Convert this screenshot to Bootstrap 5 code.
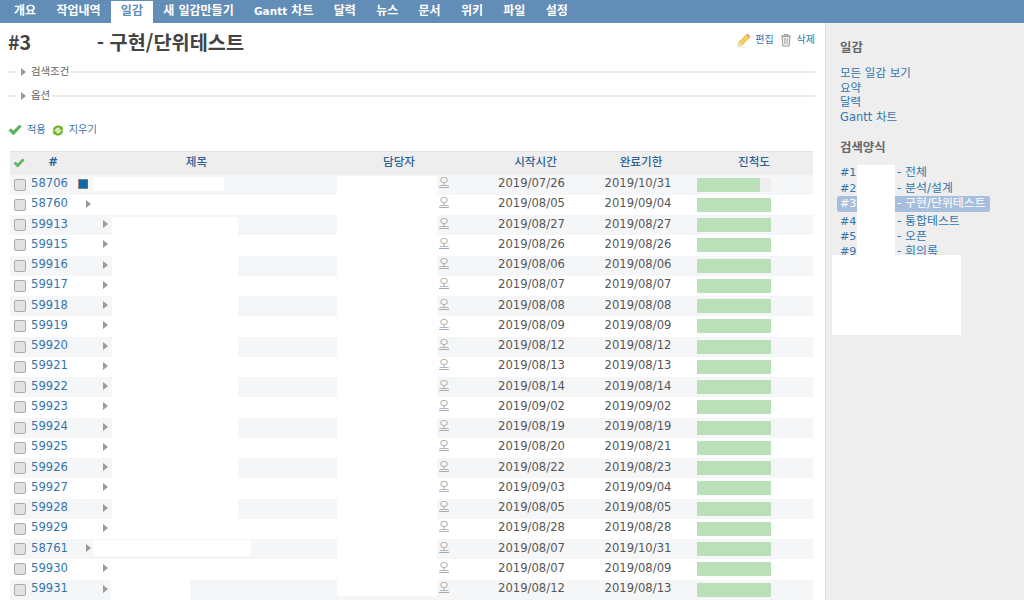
<!DOCTYPE html>
<html lang="ko">
<head>
<meta charset="utf-8">
<title>일감</title>
<link href="https://cdn.jsdelivr.net/npm/bootstrap@5.3.0/dist/css/bootstrap.min.css" rel="stylesheet">
<style>
html,body{height:100%;overflow:hidden}
body{font-family:"DejaVu Sans","Noto Sans CJK KR",sans-serif;font-size:11.5px;color:#555;background:#fff}
a{color:#3375ab;text-decoration:none}
.tabbar{height:23px;background:#628db6;padding-left:4px;gap:.3px}
.tabbar .tablink{display:block;height:22px;margin-top:1px;padding:0 10px;line-height:21px;font-size:12px;font-weight:700;color:#fff;white-space:nowrap}
.tabbar .tablink span{font-size:10.5px}
.tabbar .tablink.on{background:#fff;color:#628db6}
.shell{height:577px}
.mainpane{width:825px;padding:0 10px 0 8px;overflow:hidden}
.sidepane{width:199px;background:#eee;border-left:1px solid #e0e0e0;padding:17px 0 0 14px;position:relative;overflow:hidden}
.pagehead{height:37px;padding-top:6px}
.pagehead h2{font-family:"Noto Sans CJK KR",sans-serif;font-size:19.7px;line-height:26px;font-weight:700;color:#444;margin:0}
.pagehead h2 span{margin-left:65.5px}
.acts{font-size:10px;line-height:14px;padding-top:4px}
.acts a{margin-left:4px}
.acts a+svg{margin-left:6px}
.acts svg+a+svg+a{margin-left:5px}
.ico{display:block;flex:none}
.legendline{height:24px;color:#666;font-size:10.4px}
.legendline::before{content:"";width:8px;border-top:2px solid #eaeaea;margin-right:5px}
.legendline::after{content:"";flex:1;border-top:2px solid #eaeaea;margin-left:2px}
.legendline .tri{margin-right:5px}
.applyrow{font-size:10.2px;height:20px;margin-top:12px}
.applyrow a{margin-right:6px}
.applyrow svg{margin-right:5px}
.tablewrap{margin:11px 0 0 2px;width:803px;position:relative}
.issues{table-layout:fixed;width:803px;margin:0;font-size:11.6px;--bs-table-striped-bg:#f5f6f8;--bs-table-striped-color:#555;--bs-table-color:#555;--bs-table-bg:transparent}
.issues>thead th{height:23px;padding:0 0 1px;background:#eee;box-shadow:none;border:0;border-top:1px solid #e2e2e2;font-size:11.6px;font-weight:500;color:#2f6393;text-align:center;vertical-align:middle}
.issues>thead th.th-id{font-weight:700}
.issues>tbody>tr{height:20.25px}
.issues>tbody>tr>td{padding:0;border:0;vertical-align:middle;line-height:14px;height:20.25px}
.issues>tbody>tr>td.c-txt{padding-bottom:3px}
.issues .form-check-input{width:12px;height:12px;margin:0 0 0 4px;float:none;display:block;border:1px solid #aaa;border-radius:2px;background-color:#e2e2e2}
.th-title{padding-right:22px!important}
.th-start{padding-left:16px!important}
.th-prog{padding-left:7px!important}
.c-id{padding-left:3px!important}
.titlebox{height:20px}
.titlebox>svg{margin-bottom:2px}
.lv1{padding-left:8px}
.lv2{padding-left:25px}
.redact{display:block;background:#fff;align-self:stretch}
.r-a{width:131px;margin:2px 0 4px 5px}
.r-b{width:126px;margin-left:4px}
.r-c{width:158px;margin:1px 0 3px 2px}
.r-d{width:79px;margin-left:3px;margin-bottom:-2px}
.r-e{margin-top:2px}
.assignee a{color:#aaa;text-decoration:underline;padding-left:102px;display:block;font-size:11px}
.issues>tbody>tr>td.c-start{padding-left:8px;text-align:center}
.issues>tbody>tr>td.c-end{padding-right:6px;text-align:center}
.c-prog{padding-left:9px!important}
.issues .progress{height:14px;width:74px;border-radius:0;background:#eee}
.issues .progress-bar{background:#bae0ba}
.mask-assignee{position:absolute;left:327px;width:100px;top:25px;height:420px;background:#fff}
.sidepane h3{font-size:12.4px;line-height:16px;font-weight:700;color:#666;margin:0 0 10px}
.sidelinks a{display:block;line-height:14.6px;font-size:11.5px}
.sidelinks{margin-bottom:16px}
.sidelinks+h3{margin-bottom:9px}
.querylist a{display:flex;line-height:15px;font-size:11.9px;height:15.2px;margin-left:-3px;padding-left:3px;width:153px;white-space:nowrap}
.querylist a b{font-weight:400;width:57px;flex:none;font-size:11.2px}
.querylist a.on{background:#a7bfdc;color:#fff;border-radius:2px;height:16px;margin:0 0 2px -3px}
.mask-q{position:absolute;left:31px;top:142px;width:38px;height:90px;background:#fff}
.mask-big{position:absolute;left:6px;top:232px;width:129px;height:80px;background:#fff}
</style>
</head>
<body>
<svg width="0" height="0" class="position-absolute">
<symbol id="tri" viewBox="0 0 5 8"><path d="M0 0l5 4-5 4z" fill="#9a9a9a"/></symbol>
<symbol id="chk" viewBox="0 0 14 12"><path d="M1 6.5l1.8-1.8 2.6 2.4L11.4 1 13.2 2.6 5.4 11z" fill="#5cb85c" stroke="#4a9a4a" stroke-width=".6"/></symbol>
</svg>
<nav class="tabbar d-flex">
<a class="tablink" href="#">개요</a><a class="tablink" href="#">작업내역</a><a class="tablink on" href="#">일감</a><a class="tablink" href="#">새 일감만들기</a><a class="tablink" href="#"><span>Gantt</span> 차트</a><a class="tablink" href="#">달력</a><a class="tablink" href="#">뉴스</a><a class="tablink" href="#">문서</a><a class="tablink" href="#">위키</a><a class="tablink" href="#">파일</a><a class="tablink" href="#">설정</a>
</nav>
<div class="shell d-flex">
<main class="mainpane">
<div class="pagehead d-flex justify-content-between">
<h2>#3<span>- 구현/단위테스트</span></h2>
<div class="acts d-flex align-items-start">
<svg class="ico" width="15" height="15" viewBox="0 0 15 15"><path d="M2 13l1-4 7.5-7.5 3 3L6 12z" fill="#f2cf5c" stroke="#d8ae3c" stroke-width=".7"/><path d="M10.5 1.5l1-1 3 3-1 1z" fill="#ee8f8f"/><path d="M2 13l1-4 3 3z" fill="#f3dfb5"/><path d="M1 14h8" stroke="#e4e4e4"/></svg>
<a href="#">편집</a>
<svg class="ico" width="12" height="14" viewBox="0 0 12 14"><path d="M1 3h10M4 3V1.5h4V3M2 3.5l.8 9.5h6.4l.8-9.5z" fill="#f1f1f1" stroke="#9a9a9a"/><path d="M4.5 5v6M6 5v6M7.5 5v6" stroke="#aaa" stroke-width=".8"/></svg>
<a href="#">삭제</a>
</div>
</div>
<div class="legendline d-flex align-items-center"><svg class="ico tri" width="5" height="8"><use href="#tri"/></svg>검색조건</div>
<div class="legendline d-flex align-items-center"><svg class="ico tri" width="5" height="8"><use href="#tri"/></svg>옵션</div>
<div class="applyrow d-flex align-items-center">
<svg class="ico" width="14" height="12"><use href="#chk"/></svg><a href="#">적용</a>
<svg class="ico" width="12" height="13" viewBox="0 0 12 13"><circle cx="6" cy="6.5" r="5.5" fill="#d8ecb0"/><path d="M2 6.5a4 4 0 0 1 7-2.6M10 6.5a4 4 0 0 1-7 2.6" fill="none" stroke="#6fae2e" stroke-width="1.8"/><path d="M7 5.6L11 5.8 10.4 2zM5 7.4L1 7.2 1.6 11z" fill="#6fae2e"/></svg><a href="#">지우기</a>
</div>
<div class="tablewrap">
<table class="table table-striped issues">
<colgroup><col style="width:18px"><col style="width:50px"><col style="width:259px"><col style="width:124px"><col style="width:133px"><col style="width:94px"><col style="width:125px"></colgroup>
<thead><tr>
<th><svg class="ico mx-auto" width="12" height="10"><use href="#chk"/></svg></th><th class="th-id">#</th><th class="th-title">제목</th><th>담당자</th><th class="th-start">시작시간</th><th>완료기한</th><th class="th-prog">진척도</th>
</tr></thead>
<tbody>
<tr><td><input class="form-check-input" type="checkbox"></td><td class="c-id c-txt"><a href="#">58706</a></td><td><div class="titlebox d-flex align-items-center"><svg class="ico" width="10" height="10" viewBox="0 0 10 10"><rect width="10" height="10" fill="#d98a80"/><rect x=".8" y=".5" width="9" height="9" fill="#0f6ba8"/></svg><span class="redact r-a"></span></div></td><td class="assignee c-txt"><a href="#">오</a></td><td class="c-start c-txt">2019/07/26</td><td class="c-end c-txt">2019/10/31</td><td class="c-prog"><div class="progress"><div class="progress-bar" style="width:85%"></div></div></td></tr>
<tr><td><input class="form-check-input" type="checkbox"></td><td class="c-id c-txt"><a href="#">58760</a></td><td><div class="titlebox lv1 d-flex align-items-center"><svg class="ico" width="5" height="8"><use href="#tri"/></svg></div></td><td class="assignee c-txt"><a href="#">오</a></td><td class="c-start c-txt">2019/08/05</td><td class="c-end c-txt">2019/09/04</td><td class="c-prog"><div class="progress"><div class="progress-bar" style="width:100%"></div></div></td></tr>
<tr><td><input class="form-check-input" type="checkbox"></td><td class="c-id c-txt"><a href="#">59913</a></td><td><div class="titlebox lv2 d-flex align-items-center"><svg class="ico" width="5" height="8"><use href="#tri"/></svg><span class="redact r-b r-e"></span></div></td><td class="assignee c-txt"><a href="#">오</a></td><td class="c-start c-txt">2019/08/27</td><td class="c-end c-txt">2019/08/27</td><td class="c-prog"><div class="progress"><div class="progress-bar" style="width:100%"></div></div></td></tr>
<tr><td><input class="form-check-input" type="checkbox"></td><td class="c-id c-txt"><a href="#">59915</a></td><td><div class="titlebox lv2 d-flex align-items-center"><svg class="ico" width="5" height="8"><use href="#tri"/></svg></div></td><td class="assignee c-txt"><a href="#">오</a></td><td class="c-start c-txt">2019/08/26</td><td class="c-end c-txt">2019/08/26</td><td class="c-prog"><div class="progress"><div class="progress-bar" style="width:100%"></div></div></td></tr>
<tr><td><input class="form-check-input" type="checkbox"></td><td class="c-id c-txt"><a href="#">59916</a></td><td><div class="titlebox lv2 d-flex align-items-center"><svg class="ico" width="5" height="8"><use href="#tri"/></svg><span class="redact r-b"></span></div></td><td class="assignee c-txt"><a href="#">오</a></td><td class="c-start c-txt">2019/08/06</td><td class="c-end c-txt">2019/08/06</td><td class="c-prog"><div class="progress"><div class="progress-bar" style="width:100%"></div></div></td></tr>
<tr><td><input class="form-check-input" type="checkbox"></td><td class="c-id c-txt"><a href="#">59917</a></td><td><div class="titlebox lv2 d-flex align-items-center"><svg class="ico" width="5" height="8"><use href="#tri"/></svg></div></td><td class="assignee c-txt"><a href="#">오</a></td><td class="c-start c-txt">2019/08/07</td><td class="c-end c-txt">2019/08/07</td><td class="c-prog"><div class="progress"><div class="progress-bar" style="width:100%"></div></div></td></tr>
<tr><td><input class="form-check-input" type="checkbox"></td><td class="c-id c-txt"><a href="#">59918</a></td><td><div class="titlebox lv2 d-flex align-items-center"><svg class="ico" width="5" height="8"><use href="#tri"/></svg><span class="redact r-b"></span></div></td><td class="assignee c-txt"><a href="#">오</a></td><td class="c-start c-txt">2019/08/08</td><td class="c-end c-txt">2019/08/08</td><td class="c-prog"><div class="progress"><div class="progress-bar" style="width:100%"></div></div></td></tr>
<tr><td><input class="form-check-input" type="checkbox"></td><td class="c-id c-txt"><a href="#">59919</a></td><td><div class="titlebox lv2 d-flex align-items-center"><svg class="ico" width="5" height="8"><use href="#tri"/></svg></div></td><td class="assignee c-txt"><a href="#">오</a></td><td class="c-start c-txt">2019/08/09</td><td class="c-end c-txt">2019/08/09</td><td class="c-prog"><div class="progress"><div class="progress-bar" style="width:100%"></div></div></td></tr>
<tr><td><input class="form-check-input" type="checkbox"></td><td class="c-id c-txt"><a href="#">59920</a></td><td><div class="titlebox lv2 d-flex align-items-center"><svg class="ico" width="5" height="8"><use href="#tri"/></svg><span class="redact r-b"></span></div></td><td class="assignee c-txt"><a href="#">오</a></td><td class="c-start c-txt">2019/08/12</td><td class="c-end c-txt">2019/08/12</td><td class="c-prog"><div class="progress"><div class="progress-bar" style="width:100%"></div></div></td></tr>
<tr><td><input class="form-check-input" type="checkbox"></td><td class="c-id c-txt"><a href="#">59921</a></td><td><div class="titlebox lv2 d-flex align-items-center"><svg class="ico" width="5" height="8"><use href="#tri"/></svg></div></td><td class="assignee c-txt"><a href="#">오</a></td><td class="c-start c-txt">2019/08/13</td><td class="c-end c-txt">2019/08/13</td><td class="c-prog"><div class="progress"><div class="progress-bar" style="width:100%"></div></div></td></tr>
<tr><td><input class="form-check-input" type="checkbox"></td><td class="c-id c-txt"><a href="#">59922</a></td><td><div class="titlebox lv2 d-flex align-items-center"><svg class="ico" width="5" height="8"><use href="#tri"/></svg><span class="redact r-b"></span></div></td><td class="assignee c-txt"><a href="#">오</a></td><td class="c-start c-txt">2019/08/14</td><td class="c-end c-txt">2019/08/14</td><td class="c-prog"><div class="progress"><div class="progress-bar" style="width:100%"></div></div></td></tr>
<tr><td><input class="form-check-input" type="checkbox"></td><td class="c-id c-txt"><a href="#">59923</a></td><td><div class="titlebox lv2 d-flex align-items-center"><svg class="ico" width="5" height="8"><use href="#tri"/></svg></div></td><td class="assignee c-txt"><a href="#">오</a></td><td class="c-start c-txt">2019/09/02</td><td class="c-end c-txt">2019/09/02</td><td class="c-prog"><div class="progress"><div class="progress-bar" style="width:100%"></div></div></td></tr>
<tr><td><input class="form-check-input" type="checkbox"></td><td class="c-id c-txt"><a href="#">59924</a></td><td><div class="titlebox lv2 d-flex align-items-center"><svg class="ico" width="5" height="8"><use href="#tri"/></svg><span class="redact r-b"></span></div></td><td class="assignee c-txt"><a href="#">오</a></td><td class="c-start c-txt">2019/08/19</td><td class="c-end c-txt">2019/08/19</td><td class="c-prog"><div class="progress"><div class="progress-bar" style="width:100%"></div></div></td></tr>
<tr><td><input class="form-check-input" type="checkbox"></td><td class="c-id c-txt"><a href="#">59925</a></td><td><div class="titlebox lv2 d-flex align-items-center"><svg class="ico" width="5" height="8"><use href="#tri"/></svg></div></td><td class="assignee c-txt"><a href="#">오</a></td><td class="c-start c-txt">2019/08/20</td><td class="c-end c-txt">2019/08/21</td><td class="c-prog"><div class="progress"><div class="progress-bar" style="width:100%"></div></div></td></tr>
<tr><td><input class="form-check-input" type="checkbox"></td><td class="c-id c-txt"><a href="#">59926</a></td><td><div class="titlebox lv2 d-flex align-items-center"><svg class="ico" width="5" height="8"><use href="#tri"/></svg><span class="redact r-b"></span></div></td><td class="assignee c-txt"><a href="#">오</a></td><td class="c-start c-txt">2019/08/22</td><td class="c-end c-txt">2019/08/23</td><td class="c-prog"><div class="progress"><div class="progress-bar" style="width:100%"></div></div></td></tr>
<tr><td><input class="form-check-input" type="checkbox"></td><td class="c-id c-txt"><a href="#">59927</a></td><td><div class="titlebox lv2 d-flex align-items-center"><svg class="ico" width="5" height="8"><use href="#tri"/></svg></div></td><td class="assignee c-txt"><a href="#">오</a></td><td class="c-start c-txt">2019/09/03</td><td class="c-end c-txt">2019/09/04</td><td class="c-prog"><div class="progress"><div class="progress-bar" style="width:100%"></div></div></td></tr>
<tr><td><input class="form-check-input" type="checkbox"></td><td class="c-id c-txt"><a href="#">59928</a></td><td><div class="titlebox lv2 d-flex align-items-center"><svg class="ico" width="5" height="8"><use href="#tri"/></svg><span class="redact r-b"></span></div></td><td class="assignee c-txt"><a href="#">오</a></td><td class="c-start c-txt">2019/08/05</td><td class="c-end c-txt">2019/08/05</td><td class="c-prog"><div class="progress"><div class="progress-bar" style="width:100%"></div></div></td></tr>
<tr><td><input class="form-check-input" type="checkbox"></td><td class="c-id c-txt"><a href="#">59929</a></td><td><div class="titlebox lv2 d-flex align-items-center"><svg class="ico" width="5" height="8"><use href="#tri"/></svg></div></td><td class="assignee c-txt"><a href="#">오</a></td><td class="c-start c-txt">2019/08/28</td><td class="c-end c-txt">2019/08/28</td><td class="c-prog"><div class="progress"><div class="progress-bar" style="width:100%"></div></div></td></tr>
<tr><td><input class="form-check-input" type="checkbox"></td><td class="c-id c-txt"><a href="#">58761</a></td><td><div class="titlebox lv1 d-flex align-items-center"><svg class="ico" width="5" height="8"><use href="#tri"/></svg><span class="redact r-c"></span></div></td><td class="assignee c-txt"><a href="#">오</a></td><td class="c-start c-txt">2019/08/07</td><td class="c-end c-txt">2019/10/31</td><td class="c-prog"><div class="progress"><div class="progress-bar" style="width:100%"></div></div></td></tr>
<tr><td><input class="form-check-input" type="checkbox"></td><td class="c-id c-txt"><a href="#">59930</a></td><td><div class="titlebox lv2 d-flex align-items-center"><svg class="ico" width="5" height="8"><use href="#tri"/></svg></div></td><td class="assignee c-txt"><a href="#">오</a></td><td class="c-start c-txt">2019/08/07</td><td class="c-end c-txt">2019/08/09</td><td class="c-prog"><div class="progress"><div class="progress-bar" style="width:100%"></div></div></td></tr>
<tr><td><input class="form-check-input" type="checkbox"></td><td class="c-id c-txt"><a href="#">59931</a></td><td><div class="titlebox lv2 d-flex align-items-center"><svg class="ico" width="5" height="8"><use href="#tri"/></svg><span class="redact r-d"></span></div></td><td class="assignee c-txt"><a href="#">오</a></td><td class="c-start c-txt">2019/08/12</td><td class="c-end c-txt">2019/08/13</td><td class="c-prog"><div class="progress"><div class="progress-bar" style="width:100%"></div></div></td></tr>
</tbody>
</table>
<div class="mask-assignee"></div>
</div>
</main>
<aside class="sidepane">
<h3>일감</h3>
<div class="sidelinks">
<a href="#">모든 일감 보기</a><a href="#">요약</a><a href="#">달력</a><a href="#">Gantt 차트</a>
</div>
<h3>검색양식</h3>
<div class="querylist">
<a href="#"><b>#1</b>- 전체</a>
<a href="#"><b>#2</b>- 분석/설계</a>
<a href="#" class="on"><b>#3</b>- 구현/단위테스트</a>
<a href="#"><b>#4</b>- 통합테스트</a>
<a href="#"><b>#5</b>- 오픈</a>
<a href="#"><b>#9</b>- 회의록</a>
</div>
<div class="mask-q"></div>
<div class="mask-big"></div>
</aside>
</div>
<script src="https://cdn.jsdelivr.net/npm/bootstrap@5.3.0/dist/js/bootstrap.bundle.min.js"></script>
</body>
</html>
